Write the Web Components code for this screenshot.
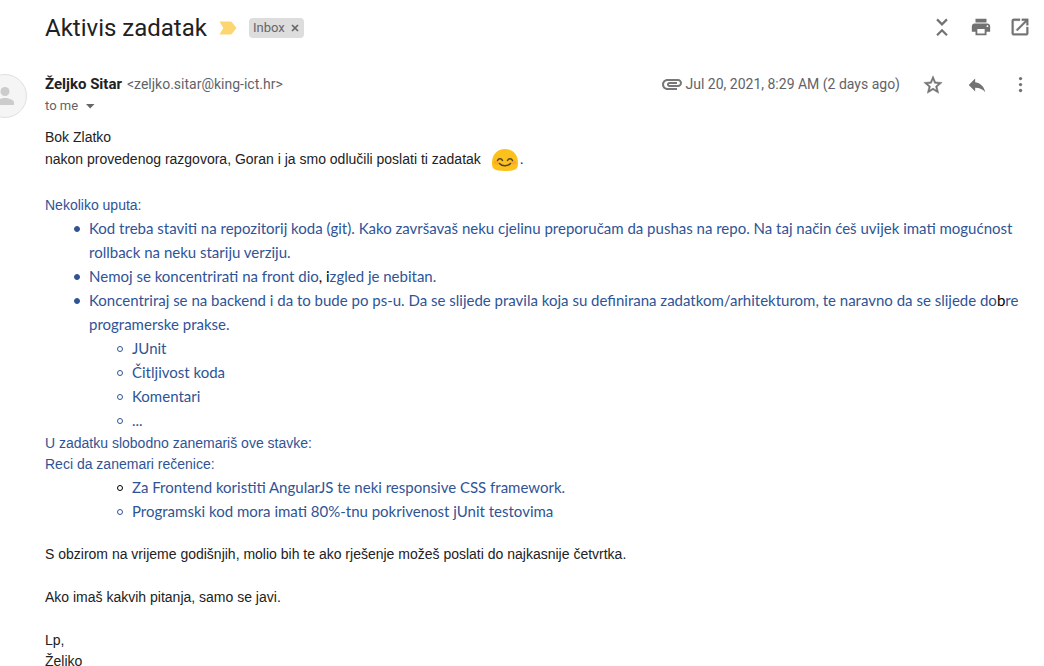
<!DOCTYPE html>
<html lang="hr">
<head>
<meta charset="utf-8">
<meta name="viewport" content="width=device-width, initial-scale=1">
<title>Aktivis zadatak</title>
<style>
  html { scrollbar-width: none; background: #fff; }
  body { margin: 0; }
</style>
</head>
<body>
<mail-message></mail-message>

<script>
const define = (name, html, setup) => {
  const template = document.createElement('template');
  template.innerHTML = html;
  customElements.define(name, class extends HTMLElement {
    constructor() {
      super();
      this.attachShadow({ mode: 'open' }).append(template.content.cloneNode(true));
    }
    connectedCallback() { if (setup) setup(this, this.shadowRoot); }
  });
};

const ICONS = {
  collapse: '<path d="M6.600 2.600L12 8l5.400-5.400M6.600 19.900L12 14.500l5.400 5.400" fill="none" stroke="currentColor" stroke-width="2.400"/>',
  print: '<path d="M19 7H5c-1.660 0-3 1.340-3 3v6h4v4h12v-4h4v-6c0-1.660-1.340-3-3-3zm-3 11H8v-5h8v5zm3-7c-.550 0-1-.450-1-1s.450-1 1-1 1 .450 1 1-.450 1-1 1zm-1-9H6v4h12V2z"/>',
  open: '<path d="M19 18H5V4h7V2H5c-1.110 0-2 .900-2 2v14c0 1.100.890 2 2 2h14c1.100 0 2-.900 2-2v-7h-2v7zM14 2v2h3.590l-9.830 9.830 1.410 1.410L19 5.410V9h2V2h-7z" stroke="currentColor" stroke-width=".4"/>',
  star: '<path d="M22 9.240l-7.190-.620L12 2 9.190 8.630 2 9.240l5.460 4.730L5.820 21 12 17.270 18.180 21l-1.630-7.030L22 9.240zM12 15.400l-3.760 2.270 1-4.280-3.320-2.880 4.380-.380L12 6.100l1.710 4.040 4.380.380-3.320 2.880 1 4.280L12 15.400z" stroke="currentColor" stroke-width=".5"/>',
  reply: '<path d="M10 9V5l-7 7 7 7v-4.100c5 0 8.500 1.600 11 5.100-1-5-4-10-11-11z"/>',
  more: '<g><circle cx="11.500" cy="5" r="1.800"/><circle cx="11.500" cy="11.500" r="1.800"/><circle cx="11.500" cy="18" r="1.800"/></g>'
};

define('icon-button', `
  <style>
    :host { display: block; flex: none; }
    button { display: block; width: 22px; height: 22px; padding: 0; border: 0; background: none; color: #727272; cursor: pointer; }
    svg { display: block; width: 22px; height: 22px; fill: currentColor; }
  </style>
  <button type="button"><svg viewBox="0 0 24 24" aria-hidden="true"></svg></button>
`, (host, root) => {
  root.querySelector('svg').innerHTML = ICONS[host.getAttribute('icon')];
  root.querySelector('button').setAttribute('aria-label', host.getAttribute('label'));
});

define('label-chip', `
  <style>
    :host { display: flex; align-items: center; gap: 4px; height: 20px; padding: 0 3px 0 4px; border-radius: 4px; background: #ddd; color: #666; font: 13px/20px Roboto, sans-serif; }
    button { display: block; padding: 0; border: 0; background: none; color: inherit; cursor: pointer; }
    svg { display: block; width: 12px; height: 12px; }
  </style>
  <span><slot></slot></span>
  <button type="button" aria-label="Remove label"><svg viewBox="0 0 12 12" aria-hidden="true"><path d="M3 3l6 6M9 3l-6 6" stroke="currentColor" stroke-width="1.700"/></svg></button>
`);

define('mail-subject', `
  <style>
    :host { display: flex; align-items: center; gap: 17px; padding: 12px 13px 0 45px; }
    .title { display: flex; align-items: center; gap: 12px; flex: 1; min-width: 0; }
    h1 { margin: 0; font: 400 24px/32px Roboto, sans-serif; color: #202124; }
    .mark { display: block; width: 18px; height: 14px; flex: none; }
  </style>
  <div class="title">
    <h1><slot></slot></h1>
    <svg class="mark" viewBox="0 0 18 14" role="img" aria-label="Important"><path d="M.500 .5h11c.700 0 1.300.300 1.700.900L17.500 7l-4.300 5.600c-.400.600-1 .900-1.700.900h-11L4.300 7z" fill="#fbd671"/></svg>
    <label-chip>Inbox</label-chip>
  </div>
  <icon-button icon="collapse" label="Collapse all"></icon-button>
  <icon-button icon="print" label="Print all"></icon-button>
  <icon-button icon="open" label="In new window"></icon-button>
`);

define('sender-avatar', `
  <style>
    :host { display: block; box-sizing: border-box; width: 44px; height: 44px; border: 1px solid #e0e0e0; border-radius: 50%; background: #f5f5f5; overflow: hidden; }
    svg { display: block; width: 42px; height: 42px; }
  </style>
  <svg viewBox="0 0 42 42" aria-hidden="true"><g fill="#ccc"><circle cx="21" cy="16.500" r="4.500"/><path d="M12 30v-2.500c0-3 6-4.500 9-4.500s9 1.500 9 4.500V30z"/></g></svg>
`);

define('mail-sender', `
  <style>
    :host { display: flex; align-items: flex-start; margin-top: 30px; padding-right: 12px; font: 14px/21px Roboto, sans-serif; color: #5f6368; }
    sender-avatar { flex: none; margin: 0 18px 0 -17px; }
    .who { flex: 1; min-width: 0; }
    .from { display: flex; align-items: baseline; gap: 5px; }
    b { font-size: 15px; color: #202124; }
    .to { display: flex; align-items: center; gap: 6px; padding: 0; border: 0; background: none; color: inherit; font: 13px/22px Roboto, sans-serif; cursor: pointer; }
    .to svg { width: 12px; height: 12px; }
    .meta { display: flex; align-items: flex-start; gap: 22px; }
    .date { display: flex; align-items: center; gap: 2px; height: 21px; white-space: nowrap; }
    .date svg { width: 24px; height: 24px; fill: #777; }
  </style>
  <sender-avatar></sender-avatar>
  <div class="who">
    <div class="from"><b><slot name="name"></slot></b><span><slot name="address"></slot></span></div>
    <button class="to" type="button"><span>to me</span><svg viewBox="0 0 12 12" aria-hidden="true"><path d="M2 4h8.500L6.200 8.500z" fill="#666"/></svg></button>
  </div>
  <div class="meta">
    <div class="date">
      <svg viewBox="0 0 24 24" aria-hidden="true"><path d="M2 11.500C2 8.460 4.460 6 7.500 6H18c2.210 0 4 1.790 4 4s-1.790 4-4 4H9.500C8.120 14 7 12.880 7 11.500S8.120 9 9.500 9H17v2H9.410c-.550 0-.550 1 0 1H18c1.100 0 2-.900 2-2s-.900-2-2-2H7.500C5.570 8 4 9.570 4 11.500S5.570 15 7.500 15H17v2H7.500C4.460 17 2 14.540 2 11.500z"/></svg>
      <slot name="date"></slot>
    </div>
    <icon-button icon="star" label="Star"></icon-button>
    <icon-button icon="reply" label="Reply"></icon-button>
    <icon-button icon="more" label="More"></icon-button>
  </div>
`);

define('smile-emoji', `
  <style>
    :host { display: block; }
    svg { display: block; width: 26px; height: 24px; }
  </style>
  <svg viewBox="0 0 26 24" role="img" aria-label="Smiling face">
    <path d="M13 1C5 1 0 7 0 14.500c0 3 .300 5 1.500 6 2 1.800 6.500 2.500 11.500 2.500s9.500-.700 11.500-2.500c1.200-1 1.500-3 1.500-6C26 7 21 1 13 1z" fill="#fcc21b"/>
    <ellipse cx="4.500" cy="14.500" rx="3" ry="2" fill="#fa9a35" opacity=".6"/><ellipse cx="21.500" cy="14.500" rx="3" ry="2" fill="#fa9a35" opacity=".6"/>
    <path d="M5.500 12.500c1-2.300 4-2.300 5 0M15.500 12.500c1-2.300 4-2.300 5 0M7.500 15.500c2.500 3 8.500 3 11 0" fill="none" stroke="#513f35" stroke-width="1.500" stroke-linecap="round"/>
  </svg>
`);

define('mail-body', `
  <style>
    :host { display: block; padding: 9px 12px 0 45px; font: 14px/21px "Liberation Sans", Arial, sans-serif; color: #222; --quote: #2f5496; }
    p { margin: 0 0 22px; }
    p.tight { margin: 0; }
    .emoji-line { display: flex; align-items: flex-start; height: 25px; line-height: 23px; }
    smile-emoji { margin: 0 2px 0 11px; }
    .quote { color: var(--quote); }
    ul { margin: 0 0 1px; padding-left: 44px; list-style: none; font: 15px/24px Lato, Carlito, sans-serif; color: var(--quote); }
    ul ul { margin: 0; padding-left: 43px; }
    ul.deep { margin-bottom: 21px; padding-left: 87px; }
    li::before { content: ""; display: inline-block; box-sizing: border-box; width: 6px; height: 6px; margin: 0 9px 0 -15px; border: 1px solid; border-radius: 50%; background: currentColor; vertical-align: 2px; }
    ul ul li::before, ul.deep li::before { background: none; }
    .ink, li.dark::before { color: #000; }
  </style>
  <p class="tight">Bok Zlatko</p>
  <p class="emoji-line"><span>nakon provedenog razgovora, Goran i ja smo odlučili poslati ti zadatak</span><smile-emoji></smile-emoji><span>.</span></p>
  <p class="tight quote">Nekoliko uputa:</p>
  <ul>
    <li>Kod treba staviti na repozitorij koda (git). Kako završavaš neku cjelinu preporučam da pushas na repo. Na taj način ćeš uvijek imati mogućnost rollback na neku stariju verziju.</li>
    <li>Nemoj se koncentrirati na front dio<span class="ink">, i</span>zgled je nebitan.</li>
    <li>Koncentriraj se na backend i da to bude po ps-u. Da se slijede pravila koja su definirana zadatkom/arhitekturom, te naravno da se slijede do<span class="ink">b</span><span>re </span>programerske prakse.
      <ul>
        <li>JUnit</li>
        <li>Čitljivost koda</li>
        <li>Komentari</li>
        <li>...</li>
      </ul>
    </li>
  </ul>
  <p class="tight quote">U zadatku slobodno zanemariš ove stavke:</p>
  <p class="tight quote">Reci da zanemari rečenice:</p>
  <ul class="deep">
    <li class="dark">Za Frontend koristiti AngularJS te neki responsive CSS framework.</li>
    <li>Programski kod mora imati 80%-tnu pokrivenost jUnit testovima</li>
  </ul>
  <p>S obzirom na vrijeme godišnjih, molio bih te ako rješenje možeš poslati do najkasnije četvrtka.</p>
  <p>Ako imaš kakvih pitanja, samo se javi.</p>
  <p class="tight">Lp,</p>
  <p class="tight">Željko</p>
`);

define('mail-message', `
  <style>
    :host { display: block; overflow-x: clip; }
  </style>
  <article>
    <mail-subject>Aktivis zadatak</mail-subject>
    <mail-sender>
      <span slot="name">Željko Sitar</span>
      <span slot="address">&lt;zeljko.sitar@king-ict.hr&gt;</span>
      <span slot="date">Jul 20, 2021, 8:29 AM (2 days ago)</span>
    </mail-sender>
    <mail-body></mail-body>
  </article>
`);
</script>
</body>
</html>
